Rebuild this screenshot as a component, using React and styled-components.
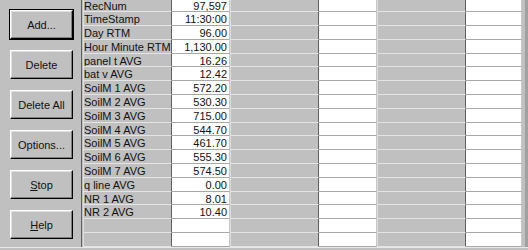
import { Fragment } from 'react';
import styled, { createGlobalStyle } from 'styled-components';

const rows = [
  ['RecNum', '97,597'],
  ['TimeStamp', '11:30:00'],
  ['Day RTM', '96.00'],
  ['Hour Minute RTM', '1,130.00'],
  ['panel t AVG', '16.26'],
  ['bat v AVG', '12.42'],
  ['SoilM 1 AVG', '572.20'],
  ['SoilM 2 AVG', '530.30'],
  ['SoilM 3 AVG', '715.00'],
  ['SoilM 4 AVG', '544.70'],
  ['SoilM 5 AVG', '461.70'],
  ['SoilM 6 AVG', '555.30'],
  ['SoilM 7 AVG', '574.50'],
  ['q line AVG', '0.00'],
  ['NR 1 AVG', '8.01'],
  ['NR 2 AVG', '10.40'],
  ['', ''],
  ['', ''],
];

const buttons = [
  { label: 'Add...', isDefault: true },
  { label: 'Delete' },
  { label: 'Delete All' },
  { label: 'Options...' },
  { label: 'Stop', key: 'S' },
  { label: 'Help', key: 'H' },
];

const GlobalStyle = createGlobalStyle`
  html, body {
    margin: 0;
    padding: 0;
    background: #c0c0c0;
  }
  body {
    font-family: 'Liberation Sans', Arial, sans-serif;
    font-size: 11px;
    color: #000;
  }
`;

const Window = styled.div`
  width: 528px;
  height: 250px;
  display: flex;
  flex-direction: column;
  overflow: hidden;
  background: #c0c0c0;
`;

const Main = styled.div`
  flex: 1;
  display: flex;
  min-height: 0;
`;

const BottomEdge = styled.div`
  height: 2px;
  border-top: 1px solid #e8e8e8;
  background: #c0c0c0;
`;

const ButtonPanel = styled.div`
  width: 82px;
  border-right: 1px solid #606060;
  margin-right: 1px;
  padding-top: 10px;
  padding-left: 10px;
  box-sizing: border-box;
  display: flex;
  flex-direction: column;
  gap: 11px;
`;

const Button = styled.button`
  width: 63px;
  height: 29px;
  padding: 0;
  box-sizing: border-box;
  background: #c0c0c0;
  font-family: 'Liberation Sans', Arial, sans-serif;
  font-size: 11px;
  color: #111;
  border: 1px solid;
  border-color: #fff #000 #000 #fff;
  box-shadow: ${(p) =>
    p.$default
      ? '0 0 0 1px #000, inset -1px -1px 0 #808080, inset 1px 1px 0 #dfdfdf'
      : 'inset -1px -1px 0 #808080, inset 1px 1px 0 #dfdfdf'};
  cursor: default;

  u {
    text-decoration: underline;
  }
`;

const Grid = styled.div`
  flex: 1;
  display: grid;
  grid-template-columns: 89px 58px 89px 58px 89px 56px;
  grid-auto-rows: 13.8px;
  margin-top: -1.5px;
  border-right: 3px solid #a0a0a0;
  align-content: start;
`;

const Cell = styled.div`
  box-sizing: border-box;
  overflow: hidden;
  white-space: nowrap;
  line-height: 12px;
  color: #111;
  background: ${(p) => (p.$fixed ? '#c0c0c0' : '#fff')};
  border-bottom: 1px solid ${(p) => (p.$fixed ? '#e4e4e4' : '#a8a8a8')};
  border-right: 1px solid ${(p) => (p.$fixed ? '#606060' : '#c8c8c8')};
  box-shadow: ${(p) => (p.$fixed ? 'inset 1px 0 0 #dcdcdc' : 'none')};
  text-align: ${(p) => (p.$num ? 'right' : 'left')};
  padding: ${(p) => (p.$num ? '1px 2px 0 0' : '1px 0 0 1px')};
`;

const Underlined = ({ label, hotkey }) => {
  if (!hotkey) return label;
  return (
    <>
      <u>{hotkey}</u>
      {label.slice(1)}
    </>
  );
};

const App = () => {
  return (
    <>
      <GlobalStyle />
      <Window>
        <Main>
          <ButtonPanel>
            {buttons.map((b) => (
              <Button key={b.label} $default={b.isDefault}>
                <Underlined label={b.label} hotkey={b.key} />
              </Button>
            ))}
          </ButtonPanel>
          <Grid>
            {rows.map(([name, value], i) => (
              <Fragment key={i}>
                <Cell $fixed>{name}</Cell>
                <Cell $num>{value}</Cell>
                <Cell $fixed />
                <Cell $num />
                <Cell $fixed />
                <Cell $num />
              </Fragment>
            ))}
          </Grid>
        </Main>
        <BottomEdge />
      </Window>
    </>
  );
};

export default App;
